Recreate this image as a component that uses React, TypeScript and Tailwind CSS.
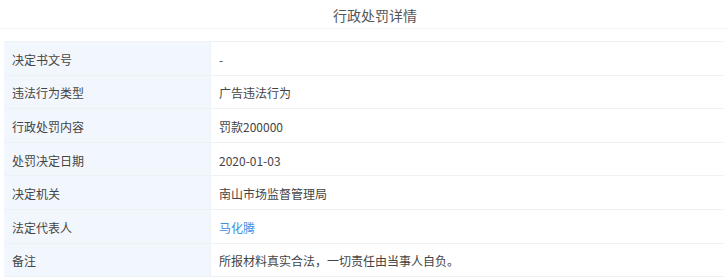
import React from 'react';

interface DetailRow {
  label: string;
  value: string;
  link?: boolean;
}

const rows: DetailRow[] = [
  { label: '决定书文号', value: '-' },
  { label: '违法行为类型', value: '广告违法行为' },
  { label: '行政处罚内容', value: '罚款200000' },
  { label: '处罚决定日期', value: '2020-01-03' },
  { label: '决定机关', value: '南山市场监督管理局' },
  { label: '法定代表人', value: '马化腾', link: true },
  { label: '备注', value: '所报材料真实合法，一切责任由当事人自负。' },
];

export default function App() {
  return (
    <div
      className="w-[728px] h-[280px] bg-white overflow-hidden text-[#333]"
      style={{ fontFamily: '"Noto Sans CJK SC", "Noto Sans", sans-serif' }}
    >
      <div className="h-[29px] flex items-center justify-center pl-[22px] border-b border-[#f3f4f6]">
        <span className="text-[14px] text-[#555] pt-[2px]">行政处罚详情</span>
      </div>

      <div className="mt-[12px] mx-[4px] border-t border-[#eef1f5]">
        {rows.map((row) => (
          <div key={row.label} className="flex h-[33.6px] border-b border-[#eef1f5] text-[12px]">
            <div className="w-[207px] shrink-0 bg-[#f2f7fd] flex items-center pl-[8px] pt-[3px] text-[#444] border-r border-[#eef1f5]">
              {row.label}
            </div>
            <div
              className={`flex-1 flex items-center pl-[8px] pt-[3px] ${
                row.link ? 'text-[#3d8fe6]' : 'text-[#444]'
              }`}
            >
              {row.value}
            </div>
          </div>
        ))}
      </div>
    </div>
  );
}
